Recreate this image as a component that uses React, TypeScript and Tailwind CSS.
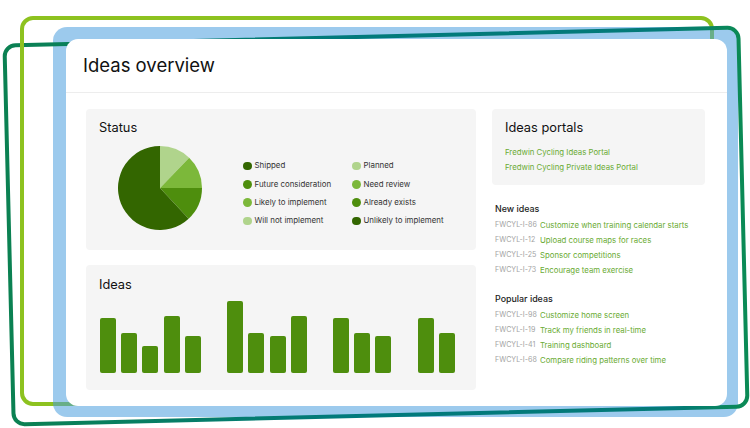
import React from "react";

const C1 = "#336600";
const C2 = "#4e8e0d";
const C3 = "#7cb83a";
const C4 = "#b0d48c";

const legend: [string, string][][] = [
  [
    ["Shipped", C1],
    ["Future consideration", C2],
    ["Likely to implement", C3],
    ["Will not implement", C4],
  ],
  [
    ["Planned", C4],
    ["Need review", C3],
    ["Already exists", C2],
    ["Unlikely to implement", C1],
  ],
];

const bars: (number | null)[] = [55, 40, 27, 57, 37, null, 72, 40, 37, 57, null, 55, 40, 37, null, 55, 40];

const newIdeas: [string, string][] = [
  ["FWCYL-I-86", "Customize when training calendar starts"],
  ["FWCYL-I-12", "Upload course maps for races"],
  ["FWCYL-I-25", "Sponsor competitions"],
  ["FWCYL-I-73", "Encourage team exercise"],
];
const popularIdeas: [string, string][] = [
  ["FWCYL-I-98", "Customize home screen"],
  ["FWCYL-I-19", "Track my friends in real-time"],
  ["FWCYL-I-41", "Training dashboard"],
  ["FWCYL-I-68", "Compare riding patterns over time"],
];

function Frames() {
  return (
    <svg className="absolute left-0 top-0" width="750" height="428" viewBox="0 0 750 428">
      <defs>
        <linearGradient id="dg" x1="0" y1="0" x2="1" y2="0">
          <stop offset="0" stopColor="#0b8152" />
          <stop offset="0.45" stopColor="#017a7c" />
          <stop offset="0.9" stopColor="#037a78" />
          <stop offset="1" stopColor="#0b8a55" />
        </linearGradient>
      </defs>
      <rect x="22" y="18" width="690" height="386" rx="11" fill="none" stroke="#8dc21f" strokeWidth="4" />
      <rect x="53" y="27" width="685" height="390" rx="14" fill="#4a9ede" fillOpacity="0.55" />
      <rect
        x="9"
        y="36.5"
        width="734"
        height="379"
        rx="11"
        fill="none"
        stroke="url(#dg)"
        strokeWidth="4"
        transform="rotate(-1.4 376 226)"
      />
      <line x1="22" y1="38" x2="22" y2="54" stroke="#8dc21f" strokeWidth="4" />
    </svg>
  );
}

function Pie() {
  return (
    <svg width="84" height="84" viewBox="0 0 84 84">
      <path d="M42 42 L42 0 A42 42 0 0 1 71.18 11.79 Z" fill={C4} />
      <path d="M42 42 L71.18 11.79 A42 42 0 0 1 84 42 Z" fill={C3} />
      <path d="M42 42 L84 42 A42 42 0 0 1 70.64 72.72 Z" fill={C2} />
      <path d="M42 42 L70.64 72.72 A42 42 0 1 1 42 0 Z" fill={C1} />
    </svg>
  );
}

function IdeaList({ title, items }: { title: string; items: [string, string][] }) {
  return (
    <div className="flex flex-col pl-[3px]">
      <div className="h-[18px] flex items-center text-[8.9px] font-medium text-[#222]">{title}</div>
      <div className="flex flex-col">
        {items.map(([k, t]) => (
          <div key={k} className="h-[15px] flex items-center whitespace-nowrap">
            <span className="w-[45px] shrink-0 text-[7.1px] text-[#a3a3a3]">{k}</span>
            <span className="text-[7.8px] text-[#6aab33]">{t}</span>
          </div>
        ))}
      </div>
    </div>
  );
}

export default function App() {
  return (
    <div className="relative w-[750px] h-[428px] bg-white overflow-hidden" style={{ fontFamily: "Inter, 'Noto Sans', sans-serif" }}>
      <Frames />
      <div className="relative ml-[66px] top-[39px] w-[661px] h-[367px] bg-white rounded-[12px] flex flex-col">
        <div className="h-[54px] border-b border-[#ededed] flex items-center pl-[17px]">
          <h1 className="text-[18.5px] text-[#111] leading-none -mt-[1px]">Ideas overview</h1>
        </div>
        <div className="flex gap-[16px] pl-[20px] pt-[16px]">
          <div className="w-[390px] flex flex-col gap-[15px]">
            <div className="h-[141px] bg-[#f5f5f5] rounded-[4px] flex flex-col">
              <div className="pl-[13px] pt-[11px] text-[12.8px] text-[#111] leading-[16px]">Status</div>
              <div className="flex mt-[10px]">
                <div className="ml-[32px]">
                  <Pie />
                </div>
                <div className="ml-[41px] mt-[11px] flex">
                  {legend.map((col, ci) => (
                    <div key={ci} className={ci === 0 ? "w-[109px] flex flex-col" : "flex flex-col"}>
                      {col.map(([label, color]) => (
                        <div key={label} className="h-[18.3px] flex items-center gap-[3px] whitespace-nowrap">
                          <span className="w-[8.5px] h-[8.5px] rounded-full shrink-0" style={{ backgroundColor: color }} />
                          <span className="text-[7.9px] text-[#333]">{label}</span>
                        </div>
                      ))}
                    </div>
                  ))}
                </div>
              </div>
            </div>
            <div className="h-[125px] bg-[#f5f5f5] rounded-[4px] flex flex-col">
              <div className="pl-[13px] pt-[12px] text-[12.8px] text-[#111] leading-[16px]">Ideas</div>
              <div className="flex-1 flex items-end pl-[14px] pb-[17px] gap-[5.2px]">
                {bars.map((h, i) => (
                  <div
                    key={i}
                    className={h === null ? "w-[16px]" : "w-[16px] rounded-[2px] bg-[#4e8e0d]"}
                    style={{ height: h === null ? 0 : h }}
                  />
                ))}
              </div>
            </div>
          </div>
          <div className="w-[213px] flex flex-col">
            <div className="h-[76px] bg-[#f5f5f5] rounded-[4px] flex flex-col pl-[13px]">
              <div className="pt-[11px] text-[12.8px] text-[#111] leading-[16px]">Ideas portals</div>
              <div className="mt-[10px] flex flex-col gap-[3px]">
                <span className="text-[7.8px] leading-[12px] text-[#6aab33]">Fredwin Cycling Ideas Portal</span>
                <span className="text-[7.8px] leading-[12px] text-[#6aab33]">Fredwin Cycling Private Ideas Portal</span>
              </div>
            </div>
            <div className="mt-[15px]">
              <IdeaList title="New ideas" items={newIdeas} />
            </div>
            <div className="mt-[12px]">
              <IdeaList title="Popular ideas" items={popularIdeas} />
            </div>
          </div>
        </div>
      </div>
    </div>
  );
}
